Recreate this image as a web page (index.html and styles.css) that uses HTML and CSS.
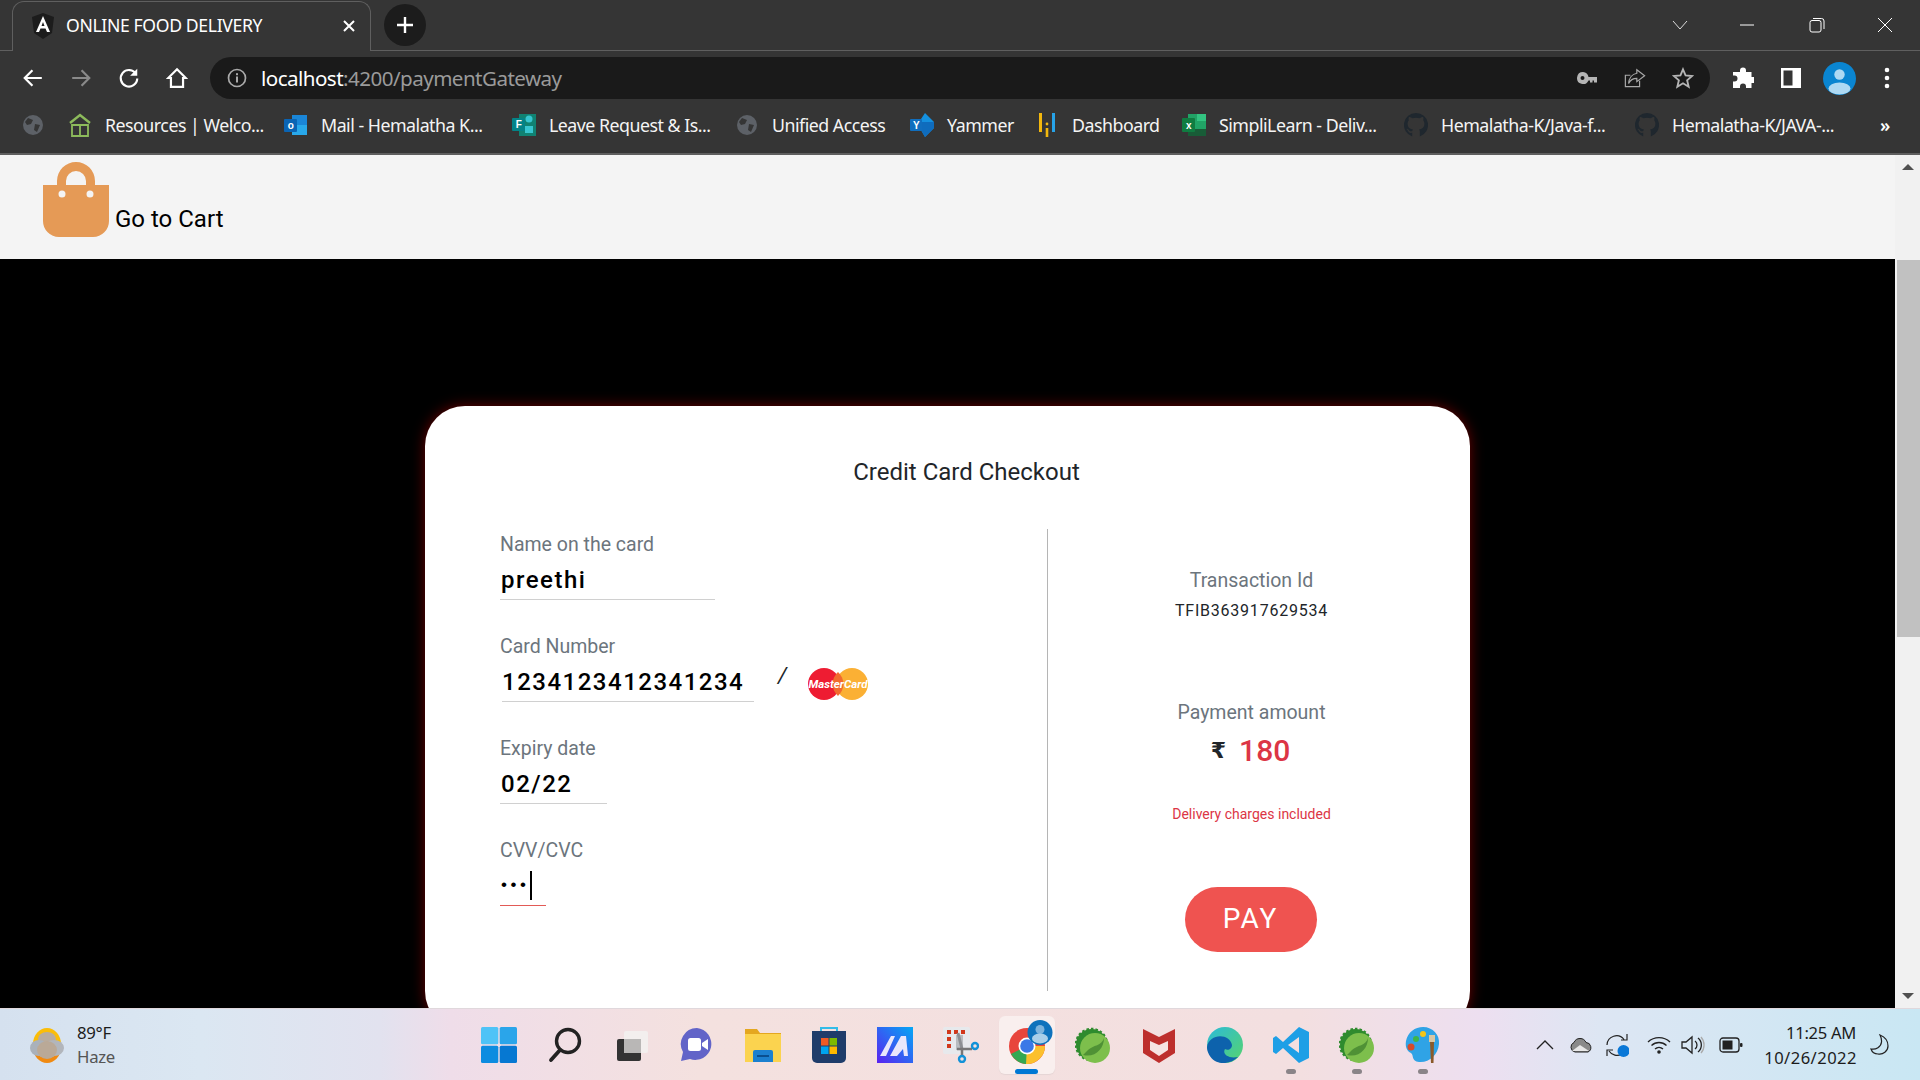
FILE: index.html
```html
<!DOCTYPE html>
<html lang="en">
<head>
<meta charset="utf-8">
<title>ONLINE FOOD DELIVERY</title>
<link rel="stylesheet" href="styles.css">
</head>
<body>
<div class="chrome">
  <div class="tabstrip">
    <div class="tab">
      <svg class="favicon" viewBox="0 0 24 26"><path d="M12 0 L1 4 L3 20 L12 26 L21 20 L23 4Z" fill="#1c1c1c"/><path d="M12 3 L5 19 H8 L9.5 15.5 H14.5 L16 19 H19Z M10.5 13 L12 9 L13.5 13Z" fill="#fff" fill-rule="evenodd"/></svg>
      <span class="tab-title">ONLINE FOOD DELIVERY</span>
      <svg class="tab-close" viewBox="0 0 12 12"><path d="M1 1L11 11M11 1L1 11" stroke="#fff" stroke-width="2"/></svg>
    </div>
    <div class="newtab"><svg viewBox="0 0 18 18"><path d="M9 1V17M1 9H17" stroke="#fff" stroke-width="2.4"/></svg></div>
    <div class="win-controls">
      <svg viewBox="0 0 16 10" class="wc-chevron"><path d="M1 1L8 9L15 1" fill="none" stroke="#ddd" stroke-width="1"/></svg>
      <svg viewBox="0 0 16 16" class="wc"><path d="M1 8H15" stroke="#fff" stroke-width="1"/></svg>
      <svg viewBox="0 0 16 16" class="wc"><rect x="1" y="3.5" width="11" height="11.5" rx="2" fill="none" stroke="#fff"/><path d="M4 1.5H12.5A2.5 2.5 0 0 1 15 4V12" fill="none" stroke="#fff"/></svg>
      <svg viewBox="0 0 16 16" class="wc"><path d="M1 1L15 15M15 1L1 15" stroke="#fff" stroke-width="1"/></svg>
    </div>
  </div>

  <div class="toolbar">
    <div class="tool"><svg viewBox="0 0 20 20"><path d="M18 10H3M9.5 3L2.5 10L9.5 17" fill="none" stroke="#fff" stroke-width="2"/></svg></div>
    <div class="tool"><svg viewBox="0 0 20 20"><path d="M2 10H17M10.5 3L17.5 10L10.5 17" fill="none" stroke="#8a8a8a" stroke-width="2"/></svg></div>
    <div class="tool"><svg viewBox="0 0 20 20"><path d="M16.5 6.5A7.5 7.5 0 1 0 17.5 10.5" fill="none" stroke="#fff" stroke-width="2"/><path d="M17.5 1.5V8H11Z" fill="#fff"/></svg></div>
    <div class="tool"><svg viewBox="0 0 20 20"><path d="M10 2L18 10H15.5V18H4.5V10H2Z" fill="none" stroke="#fff" stroke-width="2" stroke-linejoin="miter"/></svg></div>
    <div class="omnibox">
      <svg class="info" viewBox="0 0 20 20"><circle cx="10" cy="10" r="8.5" fill="none" stroke="#aaa" stroke-width="1.7"/><rect x="9" y="8.5" width="2" height="6" fill="#aaa"/><rect x="9" y="5.2" width="2" height="2" fill="#aaa"/></svg>
      <span class="url"><span class="url-host">localhost</span>:4200/paymentGateway</span>
      <div class="tool"><svg viewBox="0 0 22 14" class="key"><path d="M7 1A6 6 0 1 0 12.5 9.5H14V11.5H16.5V9.5H18V11.5H21V6H12.5A6 6 0 0 0 7 1ZM6.5 5A2 2 0 1 1 6.5 9A2 2 0 0 1 6.5 5Z" fill="#b5b5b5" fill-rule="evenodd"/></svg></div>
      <div class="tool"><svg viewBox="0 0 24 24"><path d="M17 15V21.5H1.5V9H7" fill="none" stroke="#a8a8a8" stroke-width="1.3"/><path d="M14 3L22.5 9.5L14 16V12.5C10 12.5 7 14 5 18C5.5 12 9 7.5 14 6.8Z" fill="none" stroke="#a8a8a8" stroke-width="1.3"/></svg></div>
      <div class="tool"><svg viewBox="0 0 24 24"><path d="M12 2.5L14.8 9.2L22 9.8L16.5 14.5L18.2 21.6L12 17.8L5.8 21.6L7.5 14.5L2 9.8L9.2 9.2Z" fill="none" stroke="#b5b5b5" stroke-width="2"/></svg></div>
    </div>
    <div class="toolbar-right">
      <div class="tool"><svg viewBox="0 0 22 22"><path d="M8 3.5A3 3 0 0 1 14 3.5V5H19.5V10H21A3 3 0 0 1 21 16H19.5V21H14V19.5A3 3 0 0 0 8 19.5V21H1V14.5H2.5A3 3 0 0 0 2.5 8.5H1V5H8Z" fill="#fff"/></svg></div>
      <div class="tool"><svg viewBox="0 0 22 22"><rect x="1" y="1" width="20" height="20" fill="#fff"/><rect x="3.5" y="3.5" width="9" height="15" fill="#353535"/></svg></div>
      <div class="tool tool-avatar"><svg viewBox="0 0 33 33"><circle cx="16.5" cy="16.5" r="16.5" fill="#0a85d1"/><circle cx="16.5" cy="12.5" r="5.2" fill="#aed9f3"/><ellipse cx="16.5" cy="26.5" rx="11" ry="6" fill="#aed9f3"/></svg></div>
      <div class="tool"><svg viewBox="0 0 6 22" class="dots"><circle cx="3" cy="3" r="2.3" fill="#fff"/><circle cx="3" cy="11" r="2.3" fill="#fff"/><circle cx="3" cy="19" r="2.3" fill="#fff"/></svg></div>
    </div>
  </div>

  <div class="bookmarks">
    <div class="bm-globe"><svg viewBox="0 0 20 20"><circle cx="10" cy="10" r="10" fill="#5d6167"/><path d="M5 3L10 5L8 9L4 10L2 7Z M12 9L17 10L14 17L11 15Z" fill="#353535"/></svg></div>
    <div class="bm"><svg viewBox="0 0 24 24"><path d="M2 10L12 2L22 10" fill="none" stroke="#8dbb5b" stroke-width="2.4"/><path d="M4 12H20V23H4ZM12 12V23" fill="none" stroke="#8dbb5b" stroke-width="1.8"/></svg><span>Resources | Welco...</span></div>
    <div class="bm"><svg viewBox="0 0 24 24"><rect x="8" y="2" width="15" height="20" fill="#1a86d8"/><path d="M8 12H23V22H8Z" fill="#28a8ea"/><rect x="0" y="6" width="13" height="13" rx="1" fill="#0a64b4"/><text x="6.5" y="16" class="bm-letter">o</text></svg><span>Mail - Hemalatha K...</span></div>
    <div class="bm"><svg viewBox="0 0 24 24"><rect x="7" y="1" width="17" height="22" fill="#108272"/><circle cx="17" cy="6" r="3.500" fill="#37c6d0"/><rect x="13" y="13" width="8" height="7" fill="#37c6d0"/><rect x="0" y="5" width="13" height="13" rx="1" fill="#038387"/><text x="6.5" y="15" class="bm-letter">F</text></svg><span>Leave Request &amp; Is...</span></div>
    <div class="bm"><svg viewBox="0 0 24 24"><g transform="translate(2 2)"><circle cx="10" cy="10" r="10" fill="#5d6167"/><path d="M5 3L10 5L8 9L4 10L2 7Z M12 9L17 10L14 17L11 15Z" fill="#353535"/></g></svg><span>Unified Access</span></div>
    <div class="bm"><svg viewBox="0 0 24 24"><path d="M15 0L24 9V15L15 24L11 17V6Z" fill="#1490df"/><path d="M11 9H24V15L15 24L11 17Z" fill="#0f6cbd"/><rect x="0" y="6" width="12" height="12" rx="1" fill="#106ebe"/><text x="6" y="15.5" class="bm-letter">Y</text></svg><span>Yammer</span></div>
    <div class="bm"><svg viewBox="0 0 24 24"><path d="M5.500 0V19" stroke="#f2b70d" stroke-width="3"/><path d="M12 15V24" stroke="#f2b70d" stroke-width="2.600"/><circle cx="12" cy="11" r="1.400" fill="#f2b70d"/><path d="M18.500 0V19" stroke="#27a3e8" stroke-width="3"/></svg><span>Dashboard</span></div>
    <div class="bm"><svg viewBox="0 0 24 24"><rect x="6" y="1" width="18" height="22" fill="#21a366"/><rect x="15" y="1" width="9" height="7" fill="#33c481"/><rect x="6" y="16" width="18" height="7" fill="#185c37"/><rect x="0" y="5" width="13" height="14" rx="1" fill="#107c41"/><text x="6.500" y="15.500" class="bm-letter">x</text></svg><span>SimpliLearn - Deliv...</span></div>
    <div class="bm"><svg viewBox="0 0 24 24"><path d="M12 0A12 12 0 0 0 8.200 23.400V19.800C5 20.500 4.200 18.300 4.200 18.300 3.600 16.900 2.900 16.500 2.900 16.500 1.800 15.800 3 15.800 3 15.800 4.200 15.900 4.800 17 4.800 17 5.900 18.800 7.600 18.300 8.300 18 8.400 17.200 8.700 16.700 9 16.400 6.300 16.100 3.600 15 3.600 10.500 3.600 9.200 4 8.100 4.800 7.300 4.700 7 4.300 5.800 4.900 4.100 4.900 4.100 5.900 3.800 8.200 5.300A11.400 11.400 0 0 1 15.800 5.300C18.100 3.800 19.100 4.100 19.100 4.100 19.700 5.800 19.300 7 19.200 7.300 20 8.100 20.400 9.200 20.400 10.500 20.400 15 17.700 16.100 15 16.400 15.400 16.800 15.800 17.500 15.800 18.600V23.400A12 12 0 0 0 12 0Z" fill="#1f272e"/></svg><span>Hemalatha-K/Java-f...</span></div>
    <div class="bm"><svg viewBox="0 0 24 24"><path d="M12 0A12 12 0 0 0 8.200 23.400V19.800C5 20.500 4.200 18.300 4.200 18.300 3.600 16.900 2.900 16.500 2.900 16.500 1.800 15.800 3 15.800 3 15.800 4.200 15.900 4.800 17 4.800 17 5.900 18.800 7.600 18.300 8.300 18 8.400 17.200 8.700 16.700 9 16.400 6.300 16.100 3.600 15 3.600 10.500 3.600 9.200 4 8.100 4.800 7.300 4.700 7 4.300 5.800 4.900 4.100 4.900 4.100 5.900 3.800 8.200 5.300A11.400 11.400 0 0 1 15.800 5.300C18.100 3.800 19.100 4.100 19.100 4.100 19.700 5.800 19.300 7 19.200 7.300 20 8.100 20.400 9.200 20.400 10.500 20.400 15 17.700 16.100 15 16.400 15.400 16.800 15.800 17.500 15.800 18.600V23.400A12 12 0 0 0 12 0Z" fill="#1f272e"/></svg><span>Hemalatha-K/JAVA-...</span></div>
    <div class="bm-more">»</div>
  </div>
</div>

<div class="viewport">
  <div class="page">
    <header class="page-header">
      <svg class="bag" viewBox="0 0 67 76"><path d="M14 24V20A19 19 0 0 1 52 20V24H43V20A10 10 0 0 0 23 20V24Z" fill="#e59a56"/><path fill-rule="evenodd" d="M0 24H66V60A16 16 0 0 1 50 76H16A16 16 0 0 1 0 60ZM19 29.500A3.500 3.500 0 1 0 19 36.500A3.500 3.500 0 1 0 19 29.500ZM47 29.500A3.500 3.500 0 1 0 47 36.500A3.500 3.500 0 1 0 47 29.500Z" fill="#e59a56"/></svg>
      <span class="cart-link">Go to Cart</span>
    </header>
    <main class="stage">
      <section class="card">
        <h1 class="card-title">Credit Card Checkout</h1>
        <div class="card-body">
          <div class="form-col">
            <div class="field">
              <div class="field-label">Name on the card</div>
              <div class="field-value field-name">preethi</div>
            </div>
            <div class="field">
              <div class="field-label">Card Number</div>
              <div class="card-row">
                <div class="field-value field-card">1234123412341234</div>
                <span class="slash">/</span>
                <svg class="mastercard" viewBox="0 0 60 32"><circle cx="16" cy="16" r="16" fill="#ee1c32"/><circle cx="44" cy="16" r="16" fill="#fbb034"/><path d="M30 4A16 16 0 0 1 30 28A16 16 0 0 1 30 4Z" fill="#f26a2e"/><text x="30" y="20" class="mc-text">MasterCard</text></svg>
              </div>
            </div>
            <div class="field">
              <div class="field-label">Expiry date</div>
              <div class="field-value field-expiry">02/22</div>
            </div>
            <div class="field">
              <div class="field-label">CVV/CVC</div>
              <div class="field-value field-cvv"><span class="cvv-dots">•••</span><span class="caret"></span></div>
            </div>
          </div>
          <div class="summary-col">
            <div class="summary-label">Transaction Id</div>
            <div class="txn-id">TFIB363917629534</div>
            <div class="summary-label summary-amount-label">Payment amount</div>
            <div class="amount"><span class="rupee">₹</span><span class="amount-value">180</span></div>
            <div class="delivery-note">Delivery charges included</div>
            <button class="pay-btn">PAY</button>
          </div>
        </div>
      </section>
    </main>
  </div>
  <div class="scrollbar">
    <div class="arrow-up"></div>
    <div class="thumb"></div>
    <div class="arrow-down"></div>
  </div>
</div>

<footer class="taskbar">
  <div class="weather">
    <svg viewBox="0 0 36 36"><ellipse cx="18" cy="17" rx="14" ry="16" fill="#fbbd08"/><path d="M4 20A14 16 0 0 0 32 20Z" fill="#f08a12"/><ellipse cx="18" cy="12" rx="9" ry="7" fill="#b9ac9e"/><ellipse cx="10" cy="21" rx="9" ry="8" fill="#aab1ba"/><ellipse cx="25" cy="21" rx="10" ry="8" fill="#b2b6bc"/><ellipse cx="18" cy="23" rx="10" ry="9" fill="#baa997"/></svg>
    <div class="weather-text"><div class="weather-temp">89°F</div><div class="weather-desc">Haze</div></div>
  </div>
  <div class="task-icons">
    <div class="task"><svg viewBox="0 0 36 36"><rect x="0" y="0" width="17.300" height="17.300" rx="1.500" fill="#4fc3f7"/><rect x="18.700" y="0" width="17.300" height="17.300" rx="1.500" fill="#2aa5ea"/><rect x="0" y="18.700" width="17.300" height="17.300" rx="1.500" fill="#0d8ce0"/><rect x="18.700" y="18.700" width="17.300" height="17.300" rx="1.500" fill="#0678d2"/></svg></div>
    <div class="task"><svg viewBox="0 0 36 36"><circle cx="21" cy="14" r="11.500" fill="none" stroke="#222" stroke-width="3.400"/><path d="M13 23L4 33" stroke="#222" stroke-width="3.800" stroke-linecap="round"/></svg></div>
    <div class="task"><svg viewBox="0 0 36 36"><rect x="4" y="12" width="24" height="22" rx="2" fill="#333"/><rect x="11" y="4" width="24" height="22" rx="2" fill="#f3f0ef" opacity=".92"/><rect x="11" y="12" width="17" height="14" fill="#b9b7b6"/></svg></div>
    <div class="task"><svg viewBox="0 0 36 36"><path d="M18 1A16 16 0 0 0 4 25L2 34L11 32A16 16 0 1 0 18 1Z" fill="#6264c8"/><rect x="9" y="11" width="13" height="13" rx="2.500" fill="#fff"/><path d="M23 16L29 12V23L23 19Z" fill="#fff"/></svg></div>
    <div class="task"><svg viewBox="0 0 36 36"><path d="M0 2H12L15 6H36V35H0Z" fill="#e4a720"/><rect x="0" y="7" width="36" height="28" fill="#fbd34f"/><path d="M8 35V25A2 2 0 0 1 10 23H26A2 2 0 0 1 28 25V35Z" fill="#1c80cf"/><rect x="12" y="28" width="12" height="2" fill="#0a4f8f"/></svg></div>
    <div class="task"><svg viewBox="0 0 36 36"><path d="M10 6V1H26V6" fill="none" stroke="#33bce8" stroke-width="2"/><path d="M1 4H35V31A5 5 0 0 1 30 36H6A5 5 0 0 1 1 31Z" fill="#1f3c6a"/><rect x="10" y="11" width="7.500" height="7.500" fill="#ef5a24"/><rect x="18.500" y="11" width="7.500" height="7.500" fill="#7fba00"/><rect x="10" y="19.500" width="7.500" height="7.500" fill="#00a4ef"/><rect x="18.500" y="19.500" width="7.500" height="7.500" fill="#ffb900"/></svg></div>
    <div class="task"><svg viewBox="0 0 36 36"><defs><linearGradient id="mw" x1="0" y1="1" x2="1" y2="0"><stop offset="0" stop-color="#5a22f0"/><stop offset="1" stop-color="#04a8f5"/></linearGradient></defs><rect width="36" height="36" fill="url(#mw)"/><path d="M3 29L14 9H18L9 29ZM13 29L24 9H29L31 29H27L26 22L20 29Z" fill="#e9e6fb"/></svg></div>
    <div class="task"><svg viewBox="0 0 36 36"><rect x="0" y="0" width="27" height="27" rx="2" fill="#e7e9ec"/><g fill="#d1381b"><rect x="4" y="3" width="4" height="4"/><rect x="11" y="3" width="4" height="4"/><rect x="18" y="3" width="4" height="4"/><rect x="4" y="10" width="4" height="4"/><rect x="4" y="17" width="4" height="4"/></g><rect x="13" y="8" width="7" height="15" fill="#b9bcbf"/><path d="M15 6L19 22" stroke="#8c8f93" stroke-width="3"/><path d="M14 22H29" stroke="#777" stroke-width="2.500"/><path d="M19 22V29" stroke="#777" stroke-width="2.500"/><circle cx="32" cy="19" r="3" fill="none" stroke="#1292d8" stroke-width="2.400"/><circle cx="19" cy="32" r="3" fill="none" stroke="#1292d8" stroke-width="2.400"/></svg></div>
    <div class="task task-active">
      <svg viewBox="0 0 44 44"><circle cx="18" cy="26" r="18" fill="#e8453c"/><path d="M18 26L2 34A18 18 0 0 0 20 44Z" fill="#34a853"/><path d="M18 26H36A18 18 0 0 1 17 44Z" fill="#fbc02d"/><circle cx="18" cy="26" r="8.500" fill="#fff"/><circle cx="18" cy="26" r="6.800" fill="#3b78e7"/><circle cx="31" cy="12.500" r="12.500" fill="#0e72bc"/><circle cx="31" cy="9.500" r="4.500" fill="#7db4dd"/><ellipse cx="31" cy="18.500" rx="8" ry="5" fill="#a9cfe9"/></svg>
      <div class="task-indicator"></div>
    </div>
    <div class="task"><svg viewBox="0 0 36 36"><circle cx="16.500" cy="17.500" r="15.500" fill="#2f8b2e" stroke="#2f8b2e" stroke-width="2.500" stroke-dasharray="2.500 2"/><circle cx="20" cy="21" r="15" fill="#7dbf4c"/><path d="M8 28C20 31 29 22 29 11C27 19 18 18 13 23Z" fill="#3c7d2c" opacity=".7"/></svg></div>
    <div class="task"><svg viewBox="0 0 32 36"><path d="M0 2L16 10L32 2V26L16 36L0 26Z" fill="#bd2f2d"/><path d="M7 14L16 18L25 14V23L16 29L7 23Z" fill="#f6e3e2"/></svg></div>
    <div class="task"><svg viewBox="0 0 36 36"><defs><linearGradient id="edg" x1="0" y1="0" x2="1" y2="1"><stop offset="0" stop-color="#2bbbd9"/><stop offset="1" stop-color="#57d36d"/></linearGradient></defs><circle cx="18" cy="18" r="18" fill="url(#edg)"/><path d="M0 20C2 6 23 6 25 18C25 22 21 24 18 22C15 27 21 32 31 30C25 36 15 38 8 34C3 31 0 25 0 20Z" fill="#0d62ac"/></svg></div>
    <div class="task task-running"><svg viewBox="0 0 36 36"><path d="M26 0L36 5V31L26 36L10 21L3 27L0 25V11L3 9L10 15Z M26 10L15 18L26 26Z" fill="#1e9fe6" fill-rule="evenodd"/></svg><div class="run-dot"></div></div>
    <div class="task task-running"><svg viewBox="0 0 36 36"><circle cx="16.500" cy="17.500" r="15.500" fill="#2f8b2e" stroke="#2f8b2e" stroke-width="2.500" stroke-dasharray="2.500 2"/><circle cx="20" cy="21" r="15" fill="#7dbf4c"/><path d="M8 28C20 31 29 22 29 11C27 19 18 18 13 23Z" fill="#3c7d2c" opacity=".7"/></svg><div class="run-dot"></div></div>
    <div class="task task-running"><svg viewBox="0 0 36 36"><path d="M18 0C28 0 35 8 34 17C33 28 24 36 14 35C6 34 9 28 6 26C2 24 0 20 1 14C3 5 10 0 18 0Z" fill="#2fa3e6"/><circle cx="11" cy="12" r="3" fill="#3cb54a"/><circle cx="18" cy="7" r="3" fill="#f5c518"/><circle cx="6" cy="20" r="3.500" fill="#d64a2a"/><path d="M25 15H29L28.500 36H26Z" fill="#8a5a2a"/><rect x="24" y="8" width="6" height="7" fill="#d9c7a4"/></svg><div class="run-dot"></div></div>
  </div>
  <div class="tray">
    <svg class="tray-chevron" viewBox="0 0 18 10"><path d="M1 9L9 1L17 9" fill="none" stroke="#222" stroke-width="1.300"/></svg>
    <svg class="tray-cloud" viewBox="0 0 24 16"><path d="M6 15A5 5 0 0 1 5 5.500A6.500 6.500 0 0 1 17 5.500A5 5 0 0 1 19 15Z" fill="#8a8a8a" stroke="#222" stroke-width="1"/><path d="M3 14L11 8L20 14Z" fill="#e8e8e8"/></svg>
    <svg class="tray-sync" viewBox="0 0 24 24"><path d="M2 12A9.500 9.500 0 0 1 19 6.500M22 1V7H16" fill="none" stroke="#222" stroke-width="1.200"/><path d="M17 21A9.500 9.500 0 0 1 4 18M2 23V17H8" fill="none" stroke="#222" stroke-width="1.200"/><circle cx="18.500" cy="18" r="6" fill="#0a78d7"/></svg>
    <svg class="tray-wifi" viewBox="0 0 24 18"><path d="M1 6A16 16 0 0 1 23 6M4.500 9.500A11 11 0 0 1 19.500 9.500M8 13A6 6 0 0 1 16 13" fill="none" stroke="#222" stroke-width="1.400"/><circle cx="12" cy="16" r="1.800" fill="#222"/></svg>
    <svg class="tray-sound" viewBox="0 0 24 20"><path d="M1 7H5L11 2V18L5 13H1Z" fill="none" stroke="#222" stroke-width="1.300"/><path d="M14 6A5 5 0 0 1 14 14M17 3A9 9 0 0 1 17 17" fill="none" stroke="#222" stroke-width="1.300"/><path d="M20 2A12 12 0 0 1 20 18" fill="none" stroke="#aaa" stroke-width="1.300"/></svg>
    <svg class="tray-battery" viewBox="0 0 24 16"><rect x="1" y="1" width="19" height="14" rx="3" fill="none" stroke="#222" stroke-width="1.300"/><rect x="3.500" y="3.500" width="10" height="9" fill="#222"/><rect x="21" y="6" width="2.500" height="4" rx="1" fill="#222"/></svg>
    <div class="clock"><div>11:25 AM</div><div class="clock-date">10/26/2022</div></div>
    <svg class="tray-moon" viewBox="0 0 20 22"><path d="M10 1C15 3 18 7 18 12C18 17 13 21 8 20C4 20 2 18 1 15C6 16 11 13 11.500 8C11.800 5 11 3 10 1Z" fill="none" stroke="#222" stroke-width="1.200"/></svg>
  </div>
</footer>
</body>
</html>
```

FILE: styles.css
```css
* { box-sizing: border-box; }
html, body { margin: 0; padding: 0; height: 100%; overflow: hidden; }
body { width: 1920px; height: 1080px; display: flex; flex-direction: column; font-family: Roboto, sans-serif; background: #000; }
svg { display: block; }

.chrome { height: 155px; flex: none; background: #353535; border-bottom: 2px solid #5e5e5e; color: #fff; font-family: "Noto Sans", sans-serif; }

.tabstrip { height: 51px; display: flex; align-items: flex-end; padding-left: 12px; border-bottom: 1px solid #5f5f5f; }
.tab { width: 359px; height: 50px; margin-bottom: -1px; display: flex; align-items: center; padding: 0 15px 2px 18px; border: 1px solid #5f5f5f; border-bottom: 0; border-radius: 12px 12px 0 0; background: #353535; }
.favicon { width: 24px; height: 26px; flex: none; }
.tab-title { margin: 0 0 2px 11px; flex: 1; font-size: 17.6px; letter-spacing: -0.35px; white-space: nowrap; }
.tab-close { width: 12px; height: 12px; flex: none; }
.newtab { width: 42px; height: 42px; margin: 0 0 4px 13px; background: #1c1c1c; border-radius: 50%; display: flex; align-items: center; justify-content: center; }
.newtab svg { width: 18px; height: 18px; }
.win-controls { display: flex; margin-left: auto; align-self: center; align-items: center; padding-right: 1px; }
.win-controls svg { margin-left: 53px; }
.wc-chevron { width: 16px; height: 10px; margin-right: -3px; }
.wc { width: 16px; height: 16px; }
.win-controls .wc { margin-left: 54px; }
.win-controls .wc:last-child { margin-left: 52px; margin-right: 26px; }

.toolbar { height: 54px; display: flex; align-items: center; padding: 0 0 0 9px; }
.tool { width: 48px; height: 42px; flex: none; display: flex; align-items: center; justify-content: center; }
.tool svg { width: 22px; height: 22px; }
.tool .key { width: 22px; height: 14px; }
.tool .dots { width: 6px; height: 22px; }
.tool-avatar svg { width: 33px; height: 33px; }
.omnibox { width: 1500px; height: 42px; margin-left: 9px; padding-right: 3px; background: #1a1a1a; border-radius: 21px; display: flex; align-items: center; }
.info { width: 20px; height: 20px; margin-left: 17px; flex: none; }
.url { margin-left: 14px; flex: 1; font-size: 20.6px; letter-spacing: -0.55px; color: #9a9a9a; white-space: nowrap; }
.url-host { color: #fff; }
.toolbar-right { display: flex; margin-left: 9px; }

.bookmarks { height: 48px; display: grid; grid-template-columns: 68px 216px 228px 223px 175px 125px 147px 222px 231px 231px 1fr; align-items: center; padding-bottom: 8px; }
.bm { display: flex; align-items: center; font-size: 17.8px; letter-spacing: -0.5px; white-space: nowrap; color: #f4f4f4; }
.bm svg { width: 24px; height: 24px; flex: none; margin-right: 13px; }
.bm-globe { padding-left: 23px; }
.bm-globe svg { width: 20px; height: 20px; }
.bm-letter { font: 700 10px "Liberation Sans", sans-serif; fill: #fff; text-anchor: middle; }
.bm-more { font-size: 18px; font-weight: 600; margin-left: 14px; }

.viewport { flex: 1; min-height: 0; display: flex; background: #000; }
.page { flex: 1; min-width: 0; overflow: hidden; display: flex; flex-direction: column; }
.page-header { height: 104px; flex: none; background: #f4f4f4; display: flex; align-items: flex-start; padding: 6px 0 0 43px; }
.bag { width: 67px; height: 76px; flex: none; }
.cart-link { margin: 44px 0 0 5px; font-size: 24px; line-height: 28px; color: #000; }

.stage { flex: 1; background: #000; padding-top: 147px; display: flex; justify-content: center; align-items: flex-start; }
.card { width: 1045px; flex: none; background: #fff; border-radius: 40px; padding: 52px 15px 40px 0; box-shadow: 0 0 14px #6a0000; }
.card-title { margin: 0; font-size: 24px; line-height: 28px; font-weight: 400; color: #212529; text-align: center; padding-left: 53px; }
.card-body { display: flex; margin-top: 43px; }

.form-col { width: 623px; height: 462px; flex: none; padding: 3px 0 0 75px; border-right: 1px solid #b5b5b5; }
.field { margin-bottom: 34px; height: 68px; }
.field-label { height: 24px; padding-top: 2px; font-size: 19.5px; line-height: 22px; color: #6c757d; }
.field-value { height: 44px; padding: 4px 0 0 1px; border-bottom: 1px solid #d0d0d0; display: flex; align-items: center; font-size: 24px; font-weight: 500; letter-spacing: 1.5px; color: #000; white-space: nowrap; }
.field-name { width: 215px; }
.card-row { display: flex; align-items: flex-start; }
.field-card { width: 252px; margin-left: 2px; padding-left: 0; }
.slash { margin: 2px 0 0 24px; font-size: 22px; line-height: 32px; font-style: italic; color: #212529; width: 30px; }
.mastercard { width: 60px; height: 32px; margin-top: 10px; flex: none; }
.mc-text { font: italic 700 11.500px Roboto, sans-serif; fill: #fff; text-anchor: middle; }
.field-expiry { width: 107px; }
.field-cvv { width: 46px; border-bottom-color: #e25a56; padding-top: 3px; }
.cvv-dots { font-size: 17px; letter-spacing: 3.600px; font-family: "Liberation Sans", sans-serif; }
.caret { width: 2px; height: 29px; background: #000; flex: none; margin-left: 0; }

.summary-col { width: 407px; flex: none; padding-top: 39px; display: flex; flex-direction: column; align-items: center; }
.summary-label { height: 24px; padding-top: 2px; font-size: 19.5px; line-height: 22px; color: #6c757d; }
.txn-id { margin-top: 7px; font-size: 16px; line-height: 24px; letter-spacing: 0.77px; color: #212529; }
.summary-amount-label { margin-top: 77px; }
.amount { margin-top: 9px; height: 34px; display: flex; align-items: center; }
.rupee { font-size: 22px; font-weight: 700; color: #212529; margin-right: 13px; font-family: "DejaVu Sans", sans-serif; }
.amount-value { font-size: 30px; font-weight: 500; color: #dc3545; margin-right: 2px; }
.delivery-note { margin-top: 37px; font-size: 14px; line-height: 20px; color: #dc3545; }
.pay-btn { margin: 63px 0 0 -2px; width: 132px; height: 65px; border: 0; border-radius: 33px; background: #ef5350; color: #fff; font-family: Roboto, sans-serif; font-size: 28px; letter-spacing: 2px; padding: 0 0 2px; }

.scrollbar { width: 25px; flex: none; background: #f1f1f1; display: flex; flex-direction: column; align-items: flex-end; }
.arrow-up { width: 0; height: 0; margin: 9px 6px 0 0; border: 6px solid transparent; border-top: 0; border-bottom: 6px solid #505050; }
.thumb { width: 23px; height: 377px; margin-top: 90px; background: #c1c1c1; }
.arrow-down { width: 0; height: 0; margin: auto 6px 9px 0; border: 6px solid transparent; border-bottom: 0; border-top: 6px solid #505050; }

.taskbar { height: 72px; flex: none; display: flex; align-items: center; border-top: 1px solid #e0d8dc; font-family: "Noto Sans", sans-serif; color: #1c1c1c; background: linear-gradient(90deg, #d5e1ef 0, #dbe7f2 200px, #e2e2ef 380px, #efdde9 450px, #f4e1df 700px, #f3dfe0 1300px, #eddff0 1480px, #dde6f3 1600px, #c9e7f3 1920px); }
.weather { width: 466px; flex: none; display: flex; align-items: center; padding-left: 29px; }
.weather > svg { width: 36px; height: 36px; flex: none; }
.weather-text { margin-left: 12px; padding-top: 1px; font-size: 16.8px; line-height: 24.5px; letter-spacing: -0.3px; }
.weather-desc { color: #555; }
.task-icons { width: 990px; flex: none; display: flex; align-items: center; }
.task { width: 66px; height: 58px; flex: none; display: flex; flex-direction: column; align-items: center; justify-content: center; position: relative; }
.task svg { width: 36px; height: 36px; }
.task-active { background: #f9efee; border-radius: 6px; margin: 0 5px; width: 56px; box-shadow: 0 1px 1px #e5d5d5; }
.task-active svg { width: 44px; height: 44px; margin: 0 0 6px 8px; }
.task-indicator { position: absolute; bottom: 0; left: 16px; width: 23px; height: 5px; border-radius: 3px; background: #0078d4; }
.run-dot { position: absolute; bottom: 0; left: 28px; width: 10px; height: 5px; border-radius: 3px; background: #8a8488; }
.tray { flex: 1; display: flex; align-items: center; padding-left: 80px; }
.tray-chevron { width: 18px; height: 10px; }
.tray-cloud { width: 24px; height: 16px; margin-left: 15px; }
.tray-sync { width: 24px; height: 24px; margin-left: 12px; }
.tray-wifi { width: 24px; height: 18px; margin-left: 18px; }
.tray-sound { width: 24px; height: 20px; margin-left: 10px; }
.tray-battery { width: 24px; height: 16px; margin-left: 14px; }
.clock { width: 113px; flex: none; text-align: right; font-size: 16.600px; line-height: 25px; letter-spacing: -0.3px; }
.clock-date { letter-spacing: 0.45px; margin-right: -1px; }
.tray-moon { width: 20px; height: 22px; margin-left: 14px; }
```
